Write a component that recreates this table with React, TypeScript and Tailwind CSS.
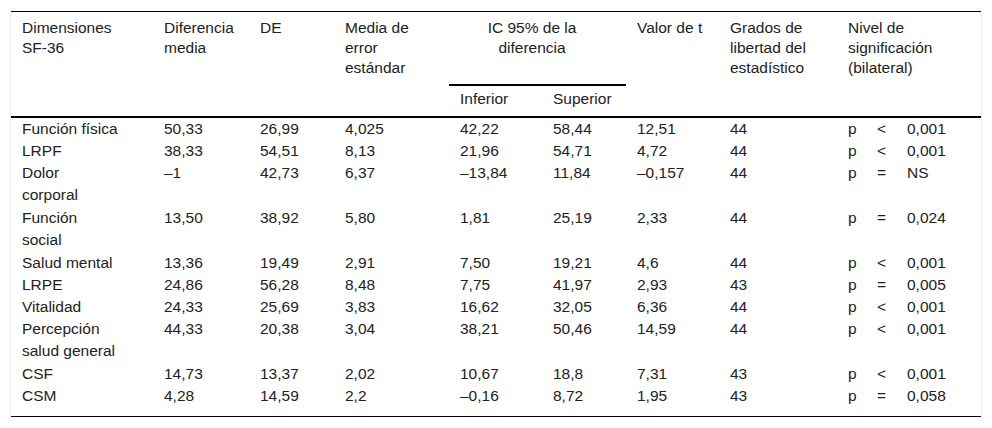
const rows: { name: React.ReactNode; v: string[]; op: string; p: string; two?: boolean }[] = [
  { name: "Función física", v: ["50,33", "26,99", "4,025", "42,22", "58,44", "12,51", "44"], op: "<", p: "0,001" },
  { name: "LRPF", v: ["38,33", "54,51", "8,13", "21,96", "54,71", "4,72", "44"], op: "<", p: "0,001" },
  { name: <>Dolor<br />corporal</>, v: ["\u20131", "42,73", "6,37", "\u201313,84", "11,84", "\u20130,157", "44"], op: "=", p: "NS", two: true },
  { name: <>Función<br />social</>, v: ["13,50", "38,92", "5,80", "1,81", "25,19", "2,33", "44"], op: "=", p: "0,024", two: true },
  { name: "Salud mental", v: ["13,36", "19,49", "2,91", "7,50", "19,21", "4,6", "44"], op: "<", p: "0,001" },
  { name: "LRPE", v: ["24,86", "56,28", "8,48", "7,75", "41,97", "2,93", "43"], op: "=", p: "0,005" },
  { name: "Vitalidad", v: ["24,33", "25,69", "3,83", "16,62", "32,05", "6,36", "44"], op: "<", p: "0,001" },
  { name: <>Percepción<br />salud general</>, v: ["44,33", "20,38", "3,04", "38,21", "50,46", "14,59", "44"], op: "<", p: "0,001", two: true },
  { name: "CSF", v: ["14,73", "13,37", "2,02", "10,67", "18,8", "7,31", "43"], op: "<", p: "0,001" },
  { name: "CSM", v: ["4,28", "14,59", "2,2", "\u20130,16", "8,72", "1,95", "43"], op: "=", p: "0,058" },
];

const widths = [142, 96, 85, 115, 93, 84, 93, 118, 144];

export default function App() {
  const hd = "pl-[11px] pt-[6px] text-left align-top font-normal border-b-2 border-black";
  return (
    <div className="min-h-screen bg-white pt-[11px] pl-[10px] text-[15.5px] leading-[20px] text-[#222]" style={{ fontFamily: '"Liberation Sans", Arial, sans-serif' }}>
      <div className="w-[972px] border-x border-[#ececec]">
        <table className="w-[970px] table-fixed border-separate border-spacing-0 border-t border-b border-black">
          <colgroup>
            {widths.map((w, i) => (
              <col key={i} style={{ width: w }} />
            ))}
          </colgroup>
          <thead>
            <tr>
              <th rowSpan={2} className={hd}>Dimensiones<br />SF-36</th>
              <th rowSpan={2} className={hd}>Diferencia<br />media</th>
              <th rowSpan={2} className={hd}>DE</th>
              <th rowSpan={2} className={hd}>Media de<br />error<br />estándar</th>
              <th colSpan={2} className="pl-[11px] pr-[22px] pt-[6px] pb-[26px] text-center align-top font-normal border-b-2 border-black">
                IC 95% de la<br />diferencia
              </th>
              <th rowSpan={2} className={hd}>Valor de t</th>
              <th rowSpan={2} className={hd}>Grados de<br />libertad del<br />estadístico</th>
              <th rowSpan={2} className={hd}>Nivel de<br />significación<br />(bilateral)</th>
            </tr>
            <tr>
              <th className="pl-[11px] pt-[3px] pb-[7px] text-left font-normal border-b-2 border-black">Inferior</th>
              <th className="pl-[11px] pt-[3px] pb-[7px] text-left font-normal border-b-2 border-black">Superior</th>
            </tr>
          </thead>
          <tbody className="leading-[22px]">
            {rows.map((r, i) => {
              const last = i === rows.length - 1;
              const pad = last ? "pb-[9px]" : r.two ? "pb-[1px]" : "";
              return (
                <tr key={i}>
                  <td className={`pl-[11px] align-top ${pad}`}>{r.name}</td>
                  {r.v.map((x, j) => (
                    <td key={j} className={`pl-[11px] align-top ${pad}`}>{x}</td>
                  ))}
                  <td className={`pl-[11px] align-top ${pad}`}>
                    <span className="inline-block w-[29px]">p</span>
                    <span className="inline-block w-[30px]">{r.op}</span>
                    <span>{r.p}</span>
                  </td>
                </tr>
              );
            })}
          </tbody>
        </table>
      </div>
    </div>
  );
}
